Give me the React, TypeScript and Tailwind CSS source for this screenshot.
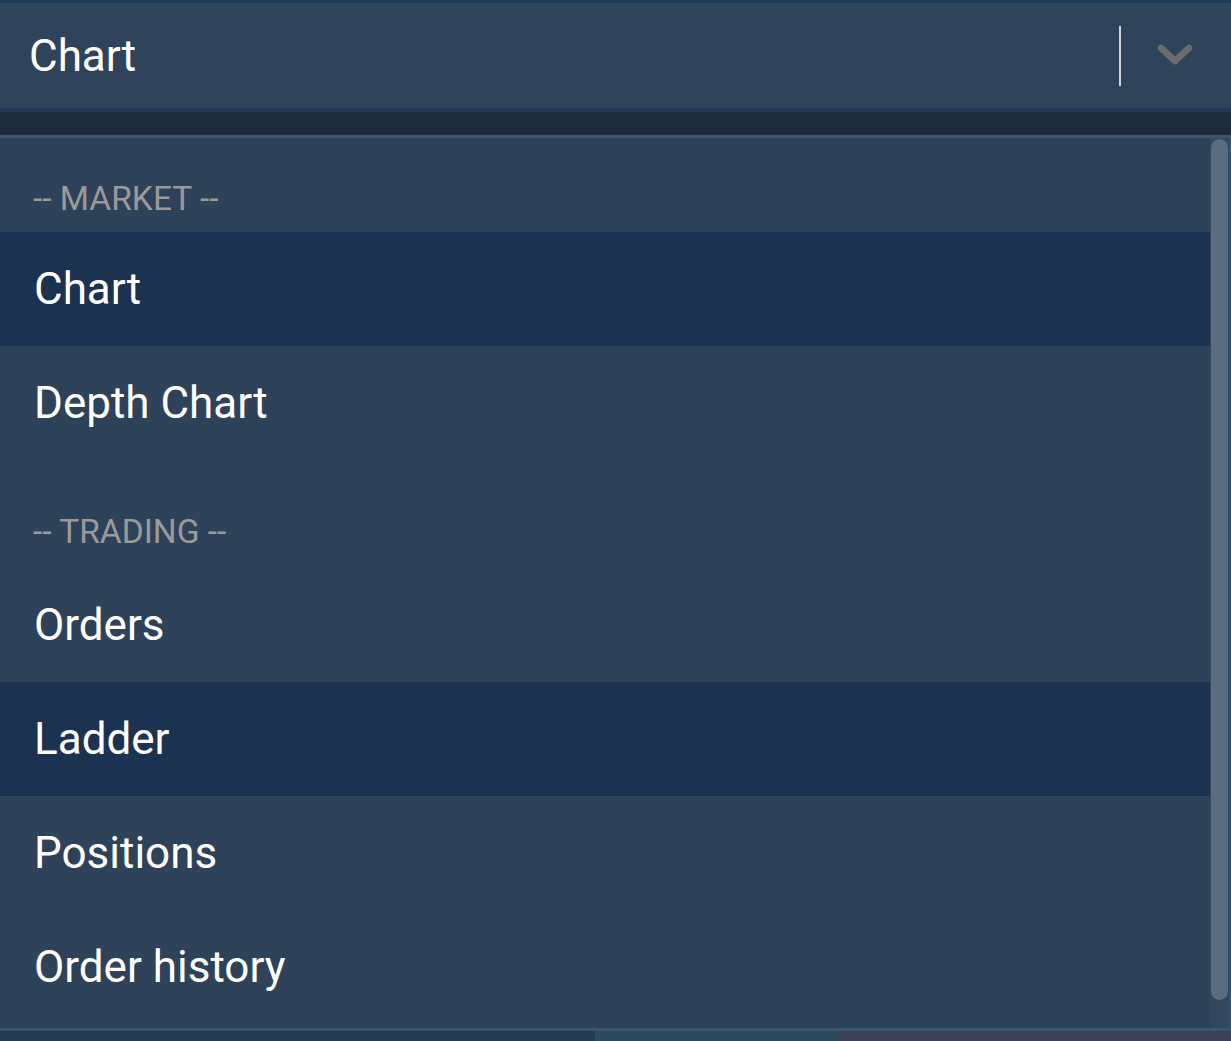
import React from 'react';

type Row = { kind: 'group' | 'item'; label: string; selected?: boolean; first?: boolean };

const ROWS: Row[] = [
  { kind: 'group', label: '-- MARKET --', first: true },
  { kind: 'item', label: 'Chart', selected: true },
  { kind: 'item', label: 'Depth Chart' },
  { kind: 'group', label: '-- TRADING --' },
  { kind: 'item', label: 'Orders' },
  { kind: 'item', label: 'Ladder', selected: true },
  { kind: 'item', label: 'Positions' },
  { kind: 'item', label: 'Order history' },
];

const App: React.FC = () => {
  return (
    <div
      className="w-full h-[1041px] overflow-hidden bg-[#1e2b3b] flex flex-col"
      style={{ fontFamily: 'Roboto, "Noto Sans", sans-serif' }}
    >
      {/* select control */}
      <div className="h-[112px] shrink-0 border-t-[3px] border-b-[4px] border-t-[#1f3a5a] border-b-[#223a58] bg-[#2f435a] flex items-center">
        <div className="flex-1 pl-[29px] text-[44px] text-white leading-none">Chart</div>
        <div className="w-[2px] h-[60px] bg-[#d2d4d8] mr-[36px]" />
        <svg width="36" height="24" viewBox="0 0 36 24" className="mr-[38px]">
          <polyline points="4,4 18,17 32,4" fill="none" stroke="#6b6b6b" strokeWidth="6.5" strokeLinecap="round" strokeLinejoin="round" />
        </svg>
      </div>

      <div className="h-[23px] shrink-0 bg-[#1e2b3b]" />

      {/* menu */}
      <div className="h-[893px] shrink-0 border-t-[3px] border-[#3a5673] bg-[#2e4259] flex">
        <div className="flex-1 flex flex-col">
          {ROWS.map((r, i) =>
            r.kind === 'group' ? (
              <div
                key={i}
                className={
                  r.first
                    ? 'h-[94px] pt-[28px] pl-[33px] flex items-center'
                    : 'h-[108px] pt-[36px] pl-[33px] flex items-center'
                }
              >
                <span className="text-[33.5px] text-[#9a9a9a] leading-none">{r.label}</span>
              </div>
            ) : (
              <div
                key={i}
                className={
                  r.selected
                    ? 'h-[114px] pl-[34px] flex items-center bg-[#1b3350]'
                    : 'h-[114px] pl-[34px] flex items-center'
                }
              >
                <span className="text-[44px] text-white leading-none">{r.label}</span>
              </div>
            )
          )}
        </div>
        {/* scrollbar */}
        <div className="w-[21px] flex">
          <div className="w-[19px] bg-[#33475e] pt-[1px] pb-[28px] px-[1px]">
            <div className="h-full rounded-full bg-[#5b6b80]" />
          </div>
          <div className="w-[2px] bg-[#35516f]" />
        </div>
      </div>

      <div className="h-[3px] shrink-0 bg-[#3a5673]" />

      {/* strip below */}
      <div className="h-[10px] shrink-0 flex">
        <div className="w-[595px] bg-[#253a52]" />
        <div className="w-[240px] bg-[#2b4a5e]" />
        <div className="flex-1 bg-[#3a4258]" />
      </div>
    </div>
  );
};

export default App;
